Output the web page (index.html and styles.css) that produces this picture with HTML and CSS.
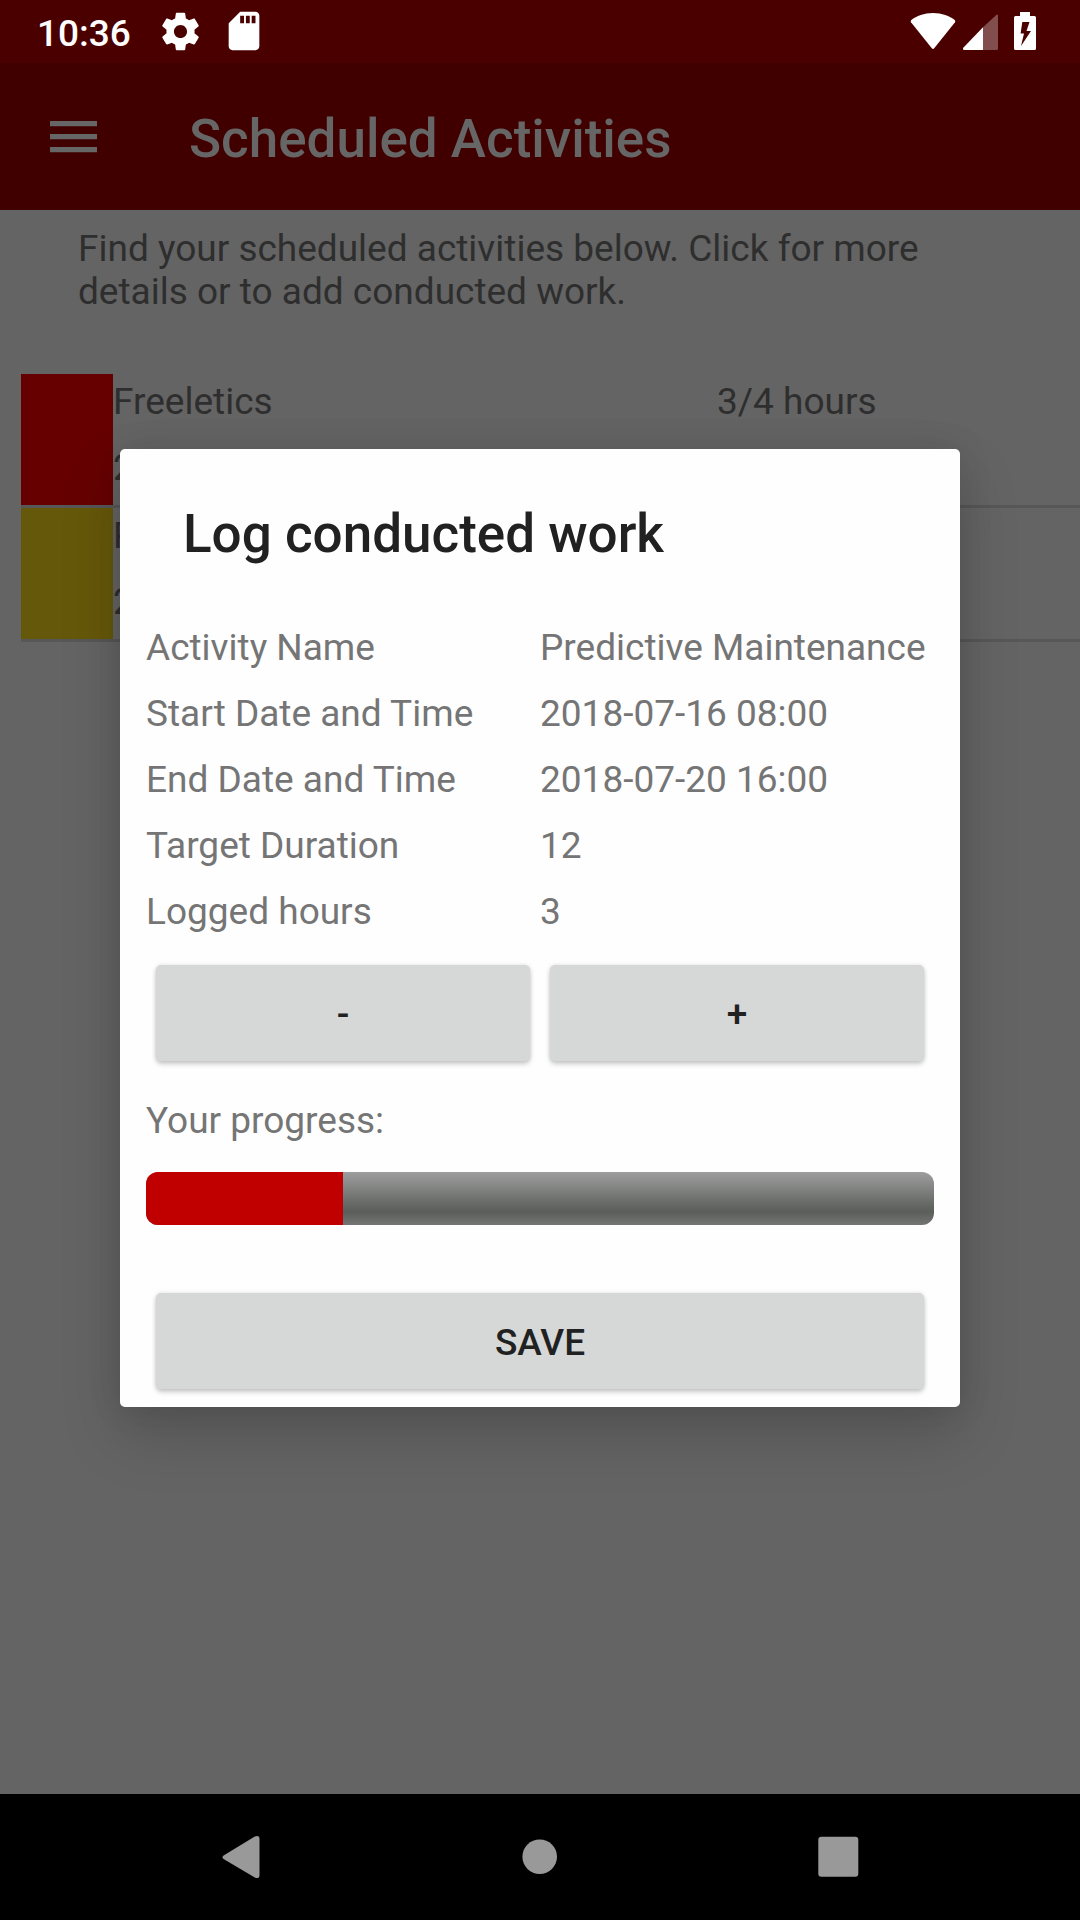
FILE: index.html
```html
<!DOCTYPE html>
<html lang="en">
<head>
<meta charset="utf-8">
<title>Scheduled Activities</title>
<link rel="stylesheet" href="styles.css">
</head>
<body>
<div class="screen">
  <header class="status-bar">
    <span class="clock">10:36</span>
    <svg class="gear" width="45" height="45" viewBox="0 0 24 24"><path d="M19.43 12.98c.04-.32.07-.64.07-.98s-.03-.66-.07-.98l2.11-1.65c.19-.15.24-.42.12-.64l-2-3.46c-.12-.22-.39-.3-.61-.22l-2.49 1c-.52-.4-1.08-.73-1.69-.98l-.38-2.65C14.46 2.18 14.25 2 14 2h-4c-.25 0-.46.18-.49.42l-.38 2.65c-.61.25-1.17.59-1.69.98l-2.49-1c-.23-.09-.49 0-.61.22l-2 3.46c-.13.22-.07.49.12.64l2.11 1.65c-.04.32-.07.65-.07.98s.03.66.07.98l-2.11 1.65c-.19.15-.24.42-.12.64l2 3.46c.12.22.39.3.61.22l2.49-1c.52.4 1.08.73 1.69.98l.38 2.65c.03.24.24.42.49.42h4c.25 0 .46-.18.49-.42l.38-2.65c.61-.25 1.17-.59 1.69-.98l2.49 1c.23.09.49 0 .61-.22l2-3.46c.12-.22.07-.49-.12-.64l-2.11-1.65zM12 15.500c-1.930 0-3.500-1.570-3.500-3.500s1.570-3.500 3.500-3.500 3.500 1.570 3.500 3.500-1.570 3.500-3.500 3.500z"/></svg>
    <svg class="sd-card" width="46" height="46" viewBox="0 0 24 24"><path d="M18 2h-8L4.020 8 4 20c0 1.100.9 2 2 2h12c1.100 0 2-.9 2-2V4c0-1.100-.9-2-2-2zm-6 6h-2V4h2v4zm3 0h-2V4h2v4zm3 0h-2V4h2v4z"/></svg>
    <svg class="system-icons" width="128" height="40" viewBox="0 0 128 40">
      <path d="M23 1C14 1 6.500 4 1.300 8Q.2 9 1 10.200L21.800 36.200Q23 37.600 24.200 36.200L45 10.200Q45.800 9 44.700 8C39.500 4 32 1 23 1Z"/>
      <path class="faint" d="M73 15.300V38H86.500Q88 38 88 36.500V4Q88 1.500 86 3.200Z"/>
      <path d="M73 15.300V38H54.500Q52 38 53.500 35.500Z"/>
      <path fill-rule="evenodd" d="M110 0H120V4H124.500Q126 4 126 5.500V36.500Q126 38 124.500 38H105.500Q104 38 104 36.500V5.500Q104 4 105.500 4H110ZM112.300 10 110.600 21.500H114L111 34 121 19H116.500L119.500 10Z"/>
    </svg>
  </header>
  <div class="app-bar">
    <svg class="menu" width="48" height="32" viewBox="0 0 48 32"><path d="M1 0H48V5.300H1ZM1 13H48V18.300H1ZM1 26H48V31.300H1Z"/></svg>
    <h1 class="app-title">Scheduled Activities</h1>
  </div>
  <main class="content">
    <p class="intro">Find your scheduled activities below. Click for more details or to add conducted work.</p>
    <ul class="activities">
      <li class="activity">
        <span class="swatch red"></span>
        <div class="activity-info"><span>Freeletics</span><span>2</span></div>
        <span class="hours">3/4 hours</span>
      </li>
      <li class="activity">
        <span class="swatch yellow"></span>
        <div class="activity-info"><span>P</span><span>2</span></div>
      </li>
    </ul>
  </main>
  <nav class="nav-bar">
    <svg width="44" height="44" viewBox="0 0 44 44"><path d="M5.400 20 35.800 1.500Q40.500-.5 40.500 4V40Q40.500 44.500 35.800 42.500L5.400 24.500Q1.500 22.200 5.400 20Z"/></svg>
    <svg width="44" height="44" viewBox="0 0 44 44"><circle cx="21.700" cy="21.700" r="17.300"/></svg>
    <svg width="44" height="44" viewBox="0 0 44 44"><rect x="1.300" y="1.700" width="40" height="40" rx="3"/></svg>
  </nav>
  <section class="dialog">
    <h2 class="dialog-title">Log conducted work</h2>
    <dl class="details">
      <dt>Activity Name</dt><dd>Predictive Maintenance</dd>
      <dt>Start Date and Time</dt><dd>2018-07-16 08:00</dd>
      <dt>End Date and Time</dt><dd>2018-07-20 16:00</dd>
      <dt>Target Duration</dt><dd>12</dd>
      <dt>Logged hours</dt><dd>3</dd>
    </dl>
    <div class="stepper">
      <button class="button">-</button>
      <button class="button">+</button>
    </div>
    <p class="progress-label">Your progress:</p>
    <div class="progress"><div class="progress-fill" style="width: 25%"></div></div>
    <button class="button save">SAVE</button>
  </section>
</div>
</body>
</html>
```
FILE: styles.css
```css
* { box-sizing: border-box; margin: 0; padding: 0; }

body {
  font-family: Roboto, sans-serif;
  font-size: 37px;
  line-height: 43px;
}

svg { display: block; flex: none; }

.screen {
  position: relative;
  display: flex;
  flex-direction: column;
  width: 1080px;
  height: 1920px;
  overflow: hidden;
  background: #646464;
}

.status-bar {
  display: flex;
  height: 63px;
  padding-left: 37px;
  background: #4b0000;
  color: #fff;
  fill: #fff;
}

.clock { width: 121px; padding-top: 12px; font-weight: 500; }
.gear { margin-top: 9px; }
.sd-card { margin: 8px 0 0 18px; }
.system-icons { margin: 12px 42px 0 auto; }
.faint { opacity: .3; }

.app-bar {
  display: flex;
  align-items: center;
  height: 147px;
  padding-left: 49px;
  background: #400000;
  color: #666;
  fill: #666;
}

.app-title {
  margin-left: 92px;
  padding-top: 4px;
  font-size: 53px;
  font-weight: 500;
  line-height: 62px;
}

.content { flex: 1; color: #2e2e2e; }

.intro { height: 164px; padding: 17px 80px 0 78px; }

.activities { list-style: none; padding-left: 21px; }

.activity {
  display: flex;
  height: 134px;
  border-bottom: 3px solid #575757;
}

.swatch { width: 92px; }
.red { background: #660000; }
.yellow { background: #66580a; }

.activity-info {
  display: flex;
  flex-direction: column;
  gap: 23px;
  width: 604px;
  padding-top: 6px;
}

.hours { padding-top: 6px; }

.nav-bar {
  display: grid;
  grid-template-columns: repeat(3, 299px);
  place-content: center;
  justify-items: center;
  height: 126px;
  background: #000;
  fill: #999;
}

.dialog {
  position: absolute;
  left: 120px;
  top: 449px;
  width: 840px;
  height: 958px;
  padding: 0 26px;
  border-radius: 5px;
  background: #fefefe;
  box-shadow: 0 28px 60px rgba(0, 0, 0, .17), 0 0 34px rgba(0, 0, 0, .1);
  color: #757575;
}

.dialog-title {
  height: 177px;
  padding: 54px 0 0 37px;
  color: #212121;
  font-size: 53px;
  font-weight: 500;
  line-height: 62px;
}

.details {
  display: grid;
  grid-template-columns: 394px 394px;
  grid-auto-rows: 66px;
}

.stepper { display: flex; gap: 20px; padding: 9px 10px 1px; }

.button {
  display: block;
  flex: 1;
  height: 96px;
  padding-top: 3px;
  border: 0;
  border-radius: 5px;
  background: #d6d8d7;
  box-shadow: 0 3px 5px rgba(0, 0, 0, .2), 0 0 4px rgba(0, 0, 0, .1);
  color: #212121;
  font: 500 37px/43px Roboto, sans-serif;
}

.progress-label { padding: 37px 0 30px; }

.progress {
  height: 53px;
  border-radius: 12px;
  overflow: hidden;
  background: linear-gradient(#9d9d9d, #5a5d5a 75%, #747674);
}

.progress-fill { height: 100%; background: #c00000; }

.save { width: 768px; margin: 68px 10px 0; }
```
